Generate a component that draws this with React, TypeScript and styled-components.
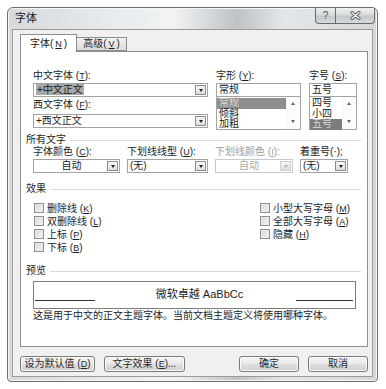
import React from "react";
import styled, { createGlobalStyle } from "styled-components";

const GlobalStyle = createGlobalStyle`
  html, body {
    margin: 0;
    padding: 0;
    background: #fff;
  }
  body {
    font-family: "Liberation Sans", "Noto Sans CJK SC", sans-serif;
    font-size: 10px;
    color: #1c1c1c;
  }
`;

const Window = styled.div`
  margin: 7px 0 0 7px;
  width: 371px;
  height: 375px;
  box-sizing: border-box;
  border: 1px solid #6e6e6e;
  border-radius: 6px 6px 4px 4px;
  background: linear-gradient(90deg, #d6dadd 0%, #e9ecee 30%, #f1f3f4 45%, #bfc3c6 62%, #e4e7e9 75%, #d3d7da 100%);
  padding: 0 4px 4px 4px;
  display: flex;
  flex-direction: column;
  box-shadow: inset 0 0 0 1px #f4f6f7;
`;

const TitleBar = styled.div`
  height: 22px;
  display: flex;
  align-items: flex-start;
  justify-content: space-between;
`;

const Title = styled.div`
  font-size: 11px;
  line-height: 11px;
  margin: 5px 0 0 3px;
  color: #222;
`;

const CaptionButtons = styled.div`
  display: flex;
  margin-right: -2px;
`;

const CaptionButton = styled.div<{ $w: number; $left?: boolean }>`
  width: ${(p) => p.$w}px;
  height: 16px;
  box-sizing: border-box;
  border: 1px solid #6a6a6a;
  border-top: none;
  border-left: ${(p) => (p.$left ? "1px solid #6a6a6a" : "none")};
  border-radius: ${(p) => (p.$left ? "0 0 0 4px" : "0 0 4px 0")};
  background: linear-gradient(180deg, #eceeef 0%, #d9dcde 45%, #c4c8cb 55%, #d6d9dc 100%);
  display: flex;
  align-items: center;
  justify-content: center;
  font-size: 10px;
  color: #555;
`;

const Body = styled.div`
  flex: 1;
  background: #f0f0f0;
  border: 1px solid #9a9a9a;
  padding: 4px 4px 4px 7px;
  display: flex;
  flex-direction: column;
`;

const Tabs = styled.div`
  display: flex;
  align-items: flex-end;
  height: 17px;
  position: relative;
  z-index: 1;
`;

const Tab = styled.div<{ $active?: boolean }>`
  box-sizing: border-box;
  height: ${(p) => (p.$active ? 18 : 14)}px;
  margin-bottom: ${(p) => (p.$active ? -1 : 0)}px;
  padding: 0 ${(p) => (p.$active ? 9 : 6)}px;
  border: 1px solid #8d8d8d;
  border-bottom: ${(p) => (p.$active ? "none" : "1px solid #8d8d8d")};
  border-left: ${(p) => (p.$active ? "1px solid #8d8d8d" : "none")};
  background: ${(p) => (p.$active ? "#fff" : "linear-gradient(180deg, #f2f2f2, #dcdcdc)")};
  line-height: ${(p) => (p.$active ? 16 : 12)}px;
  display: flex;
  align-items: center;
  gap: 2px;
`;

const Panel = styled.div`
  height: 296px;
  box-sizing: border-box;
  background: #fff;
  border: 1px solid #8d8d8d;
  padding: 18px 5px 0 5px;
  display: flex;
  flex-direction: column;
`;

const TopGrid = styled.div`
  display: grid;
  grid-template-columns: 175px 85px 48px;
  column-gap: 8px;
  margin-left: 7px;
`;

const Column = styled.div`
  display: flex;
  flex-direction: column;
`;

const Label = styled.div<{ $disabled?: boolean; $gap?: number }>`
  line-height: 12px;
  height: 12px;
  white-space: nowrap;
  margin-top: ${(p) => p.$gap ?? 0}px;
  color: ${(p) => (p.$disabled ? "#9c9c9c" : "#1c1c1c")};
`;

const U = styled.span`
  text-decoration: underline;
  font-size: 9px;
`;

const Combo = styled.div<{ $disabled?: boolean; $center?: boolean; $gap?: number }>`
  height: 14px;
  box-sizing: border-box;
  margin-top: ${(p) => p.$gap ?? 1}px;
  border: 1px solid ${(p) => (p.$disabled ? "#c9c9c9" : "#a3a3a3")};
  background: #fff;
  display: flex;
  align-items: center;
  color: ${(p) => (p.$disabled ? "#a8a8a8" : "#1c1c1c")};
`;

const ComboText = styled.div<{ $center?: boolean }>`
  flex: 1;
  padding-left: 2px;
  line-height: 12px;
  text-align: ${(p) => (p.$center ? "center" : "left")};
  white-space: nowrap;
  overflow: hidden;
`;

const Selected = styled.span`
  background: #a9a9a9;
  color: #1a1a1a;
  padding: 0 1px;
`;

const ArrowButton = styled.div<{ $disabled?: boolean }>`
  width: 11px;
  height: 10px;
  margin-right: 1px;
  box-sizing: border-box;
  border: 1px solid ${(p) => (p.$disabled ? "#cfcfcf" : "#8c8c8c")};
  background: linear-gradient(180deg, #f6f6f6, #dedede);
  display: flex;
  align-items: center;
  justify-content: center;
  &::after {
    content: "";
    border-left: 2.5px solid transparent;
    border-right: 2.5px solid transparent;
    border-top: 3px solid ${(p) => (p.$disabled ? "#b5b5b5" : "#222")};
  }
`;

const ListBox = styled.div`
  height: 34px;
  margin-top: -1px;
  box-sizing: border-box;
  border: 1px solid #a3a3a3;
  display: flex;
`;

const ListItems = styled.div`
  flex: 1;
  display: flex;
  flex-direction: column;
  padding-top: 1px;
`;

const ListItem = styled.div<{ $selected?: boolean; $dark?: boolean }>`
  height: 10.5px;
  line-height: 10.5px;
  padding-left: 2px;
  background: ${(p) => (p.$selected ? (p.$dark ? "#7c7c7c" : "#8e8e8e") : "transparent")};
  color: ${(p) => (p.$selected ? "#d8d8d8" : "#1c1c1c")};
`;

const ScrollBar = styled.div`
  width: 14px;
  display: flex;
  flex-direction: column;
  justify-content: space-between;
  align-items: center;
  padding: 5px 0 6px;
  background: #fbfbfb;
`;

const Tri = styled.div<{ $up?: boolean }>`
  border-left: 2px solid transparent;
  border-right: 2px solid transparent;
  ${(p) => (p.$up ? "border-bottom: 3px solid #666;" : "border-top: 3px solid #666;")}
`;

const SectionHeader = styled.div<{ $gap: number }>`
  display: flex;
  align-items: center;
  gap: 4px;
  height: 12px;
  line-height: 12px;
  margin-top: ${(p) => p.$gap}px;
  margin-right: 1px;
  &::after {
    content: "";
    flex: 1;
    height: 1px;
    background: #dcdcdc;
  }
`;

const FieldRow = styled.div`
  display: grid;
  grid-template-columns: 87px 81px 78px 48px;
  column-gap: 7px;
  margin-left: 7px;
  margin-right: 5px;
  & > div:nth-child(2) {
    margin-left: 0;
  }
`;

const EffectsGrid = styled.div`
  display: grid;
  grid-template-columns: 226px 1fr;
  margin: 6px 0 0 8px;
`;

const CheckRow = styled.div`
  height: 13px;
  display: flex;
  align-items: center;
  gap: 3px;
  white-space: nowrap;
`;

const CheckBox = styled.div`
  width: 10px;
  height: 10px;
  box-sizing: border-box;
  border: 1px solid #8f8f8f;
  background: linear-gradient(135deg, #d4d4d4, #f7f7f7);
  box-shadow: inset 0 0 0 1px #eaeaea;
`;

const Preview = styled.div`
  height: 28px;
  box-sizing: border-box;
  margin: 4px 6px 0 7px;
  border: 1px solid #7d7d7d;
  display: flex;
  align-items: center;
  padding: 0 2px 0 1px;
`;

const PreviewLine = styled.div<{ $w: number }>`
  width: ${(p) => p.$w}px;
  height: 1px;
  background: #333;
  margin-top: 10px;
`;

const PreviewText = styled.div`
  flex: 1;
  text-align: center;
  font-size: 11px;
  line-height: 12px;
  padding-left: 8px;
  margin-top: -2px;
`;

const Description = styled.div`
  line-height: 12px;
  margin: 1px 0 0 7px;
  white-space: nowrap;
`;

const ButtonRow = styled.div`
  display: flex;
  margin-top: 9px;
  gap: 9px;
`;

const Button = styled.div<{ $w: number; $push?: boolean }>`
  width: ${(p) => p.$w}px;
  height: 16px;
  box-sizing: border-box;
  margin-left: ${(p) => (p.$push ? "auto" : "0")};
  border: 1px solid #7a7a7a;
  border-radius: 3px;
  background: linear-gradient(180deg, #f4f4f4 0%, #ebebeb 45%, #dddddd 55%, #d3d3d3 100%);
  box-shadow: inset 0 0 0 1px #fafafa;
  display: flex;
  align-items: center;
  justify-content: center;
  line-height: 12px;
  color: #2a2a2a;
  white-space: nowrap;
`;

const Key = ({ k }: { k: string }) => (
  <>
    (<U>{k}</U>)
  </>
);

const Dropdown = ({
  text,
  center,
  disabled,
  gap,
}: {
  text: React.ReactNode;
  center?: boolean;
  disabled?: boolean;
  gap?: number;
}) => (
  <Combo $disabled={disabled} $gap={gap}>
    <ComboText $center={center}>{text}</ComboText>
    <ArrowButton $disabled={disabled} />
  </Combo>
);

const List = ({ items, sel, dark }: { items: string[]; sel: number; dark?: boolean }) => (
  <ListBox>
    <ListItems>
      {items.map((it, i) => (
        <ListItem key={it} $selected={i === sel} $dark={dark}>
          {it}
        </ListItem>
      ))}
    </ListItems>
    <ScrollBar>
      <Tri $up />
      <Tri />
    </ScrollBar>
  </ListBox>
);

const Check = ({ label, k }: { label: string; k: string }) => (
  <CheckRow>
    <CheckBox />
    <span>
      {label}
      <Key k={k} />
    </span>
  </CheckRow>
);

export default function App() {
  return (
    <>
      <GlobalStyle />
      <Window>
        <TitleBar>
          <Title>字体</Title>
          <CaptionButtons>
            <CaptionButton $w={21} $left>
              ?
            </CaptionButton>
            <CaptionButton $w={39}>
              <svg width="11" height="9" viewBox="0 0 11 9">
                <path d="M2 1.5 L9 7.5 M9 1.5 L2 7.5" stroke="#555" strokeWidth="3" strokeLinecap="round" />
                <path d="M2 1.5 L9 7.5 M9 1.5 L2 7.5" stroke="#f4f4f4" strokeWidth="1.4" strokeLinecap="round" />
              </svg>
            </CaptionButton>
          </CaptionButtons>
        </TitleBar>
        <Body>
          <Tabs>
            <Tab $active>
              字体<Key k="N" />
            </Tab>
            <Tab>
              高级<Key k="V" />
            </Tab>
          </Tabs>
          <Panel>
            <TopGrid>
              <Column>
                <Label>
                  中文字体 <Key k="T" />:
                </Label>
                <Dropdown text={<Selected>+中文正文</Selected>} />
                <Label $gap={2}>
                  西文字体 <Key k="F" />:
                </Label>
                <Dropdown text="+西文正文" gap={3} />
              </Column>
              <Column>
                <Label>
                  字形 <Key k="Y" />:
                </Label>
                <Combo>
                  <ComboText>常规</ComboText>
                </Combo>
                <List items={["常规", "倾斜", "加粗"]} sel={0} />
              </Column>
              <Column>
                <Label>
                  字号 <Key k="S" />:
                </Label>
                <Combo>
                  <ComboText>五号</ComboText>
                </Combo>
                <List items={["四号", "小四", "五号"]} sel={2} dark />
              </Column>
            </TopGrid>

            <SectionHeader $gap={4}>所有文字</SectionHeader>
            <FieldRow>
              <Column>
                <Label>
                  字体颜色 <Key k="C" />:
                </Label>
                <Dropdown text="自动" center />
              </Column>
              <Column>
                <Label>
                  下划线线型 <Key k="U" />:
                </Label>
                <Dropdown text="(无)" />
              </Column>
              <Column>
                <Label $disabled>
                  下划线颜色 <Key k="I" />:
                </Label>
                <Dropdown text="自动" center disabled />
              </Column>
              <Column>
                <Label>着重号(·);</Label>
                <Dropdown text="(无)" />
              </Column>
            </FieldRow>

            <SectionHeader $gap={10}>效果</SectionHeader>
            <EffectsGrid>
              <Column>
                <Check label="删除线 " k="K" />
                <Check label="双删除线 " k="L" />
                <Check label="上标 " k="P" />
                <Check label="下标 " k="B" />
              </Column>
              <Column>
                <Check label="小型大写字母 " k="M" />
                <Check label="全部大写字母 " k="A" />
                <Check label="隐藏 " k="H" />
              </Column>
            </EffectsGrid>

            <SectionHeader $gap={12}>预览</SectionHeader>
            <Preview>
              <PreviewLine $w={60} />
              <PreviewText>微软卓越 AaBbCc</PreviewText>
              <PreviewLine $w={57} />
            </Preview>
            <Description>这是用于中文的正文主题字体。当前文档主题定义将使用哪种字体。</Description>
          </Panel>
          <ButtonRow>
            <Button $w={75}>
              设为默认值 <Key k="D" />
            </Button>
            <Button $w={81}>
              文字效果 <Key k="E" />...
            </Button>
            <Button $w={60} $push>
              确定
            </Button>
            <Button $w={60}>取消</Button>
          </ButtonRow>
        </Body>
      </Window>
    </>
  );
}
